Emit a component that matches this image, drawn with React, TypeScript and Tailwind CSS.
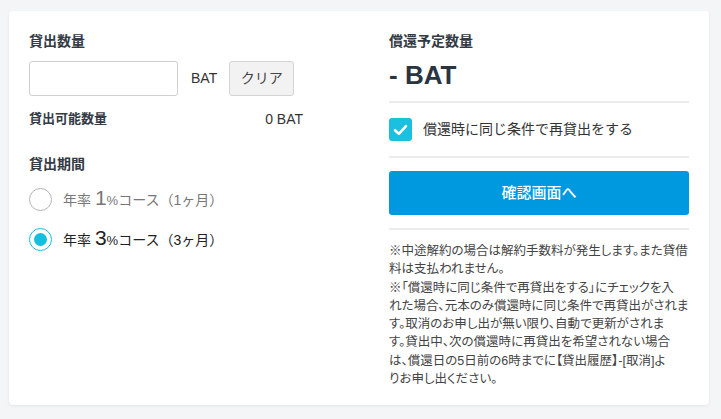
import React, { useState } from 'react';

const font = { fontFamily: '"Liberation Sans", "Noto Sans CJK JP", sans-serif' };

const App: React.FC = () => {
  const [amount, setAmount] = useState<string>('');
  const [course, setCourse] = useState<number>(3);
  const [relend, setRelend] = useState<boolean>(true);

  const courses = [
    { rate: 1, months: 1 },
    { rate: 3, months: 3 },
  ];

  return (
    <div className="min-h-[419px] w-[721px] bg-[#f4f5f7] pt-[11px] pl-[9px]" style={font}>
      <div className="w-[700px] h-[394px] bg-white rounded-[4px] shadow-[0_1px_3px_rgba(0,0,0,0.08)] px-[20px] pt-[20px] flex">
        {/* Left column */}
        <div className="flex-1">
          <h2 className="text-[14px] leading-[20px] font-bold text-[#333a44]">貸出数量</h2>
          <div className="mt-[10px] flex items-center">
            <input
              type="text"
              value={amount}
              onChange={(e) => setAmount(e.target.value)}
              className="w-[149px] h-[35px] border border-[#cfcfcf] rounded-[3px] px-2 text-[14px] outline-none"
            />
            <span className="ml-[13px] text-[14px] text-[#333]">BAT</span>
            <button
              onClick={() => setAmount('')}
              className="ml-[12px] w-[65px] h-[35px] bg-[#f2f2f2] border border-[#d4d4d4] rounded-[3px] text-[14px] text-[#444]"
            >
              クリア
            </button>
          </div>
          <div className="mt-[13px] w-[274px] flex justify-between items-center">
            <span className="text-[13px] leading-[20px] font-bold text-[#333a44]">貸出可能数量</span>
            <span className="text-[14px] leading-[20px] text-[#333]">0 BAT</span>
          </div>

          <h2 className="mt-[25px] text-[14px] leading-[20px] font-bold text-[#333a44]">貸出期間</h2>
          <div className="mt-[12px] flex flex-col gap-[14px]">
            {courses.map(c => {
              const selected = course === c.rate;
              return (
                <label key={c.rate} className="flex items-center cursor-pointer" onClick={() => setCourse(c.rate)}>
                  <span
                    className={
                      selected
                        ? 'w-[23px] h-[23px] rounded-full border border-[#12bfde] flex items-center justify-center'
                        : 'w-[23px] h-[23px] rounded-full border border-[#b5b5b5] flex items-center justify-center'
                    }
                  >
                    {selected && <span className="w-[13px] h-[13px] rounded-full bg-[#12bfde]" />}
                  </span>
                  <span className={selected ? 'ml-[11px] text-[14px] text-[#222] leading-[23px]' : 'ml-[11px] text-[14px] text-[#777] leading-[23px]'}>
                    年率 <span className="text-[21px] font-light">{c.rate}</span>
                    <span className="text-[13px]">%</span>コース（{c.months}ヶ月）
                  </span>
                </label>
              );
            })}
          </div>
        </div>

        {/* Right column */}
        <div className="w-[300px]">
          <h2 className="text-[14px] leading-[20px] font-bold text-[#333a44]">償還予定数量</h2>
          <div className="mt-[8px] text-[26px] leading-[32px] font-bold text-[#2a3542]">- BAT</div>
          <div className="mt-[10px] h-[2px] bg-[#ececec]" />
          <label className="mt-[15px] flex items-center cursor-pointer" onClick={() => setRelend(!relend)}>
            <span className={relend ? 'w-[23px] h-[23px] rounded-[3px] bg-[#1bbfdf] flex items-center justify-center' : 'w-[23px] h-[23px] rounded-[3px] border border-[#b5b5b5] bg-white'}>
              {relend && (
                <svg width="15" height="12" viewBox="0 0 15 12" fill="none">
                  <path d="M2 6.2 L5.8 9.8 L13 2.2" stroke="white" strokeWidth="2.6" strokeLinecap="round" strokeLinejoin="round" />
                </svg>
              )}
            </span>
            <span className="ml-[11px] text-[14px] text-[#333]">償還時に同じ条件で再貸出をする</span>
          </label>
          <div className="mt-[15px] h-[2px] bg-[#ececec]" />
          <button className="mt-[13px] w-full h-[44px] rounded-[3px] bg-[#0099df] text-white text-[15px] font-medium">
            確認画面へ
          </button>
          <div className="mt-[13px] h-[2px] bg-[#ececec]" />
          <div className="mt-[12px] text-[12.5px] leading-[18.3px] text-[#444] [font-feature-settings:'palt']">
            <p>※中途解約の場合は解約手数料が発生します。また貸借<br />料は支払われません。</p>
            <p>
              ※「償還時に同じ条件で再貸出をする」にチェックを入<br />
              れた場合、元本のみ償還時に同じ条件で再貸出がされま<br />
              す。取消のお申し出が無い限り、自動で更新がされま<br />
              す。貸出中、次の償還時に再貸出を希望されない場合<br />
              は、償還日の5日前の6時までに【貸出履歴】-[取消]よ<br />
              りお申し出ください。
            </p>
          </div>
        </div>
      </div>
    </div>
  );
};

export default App;
